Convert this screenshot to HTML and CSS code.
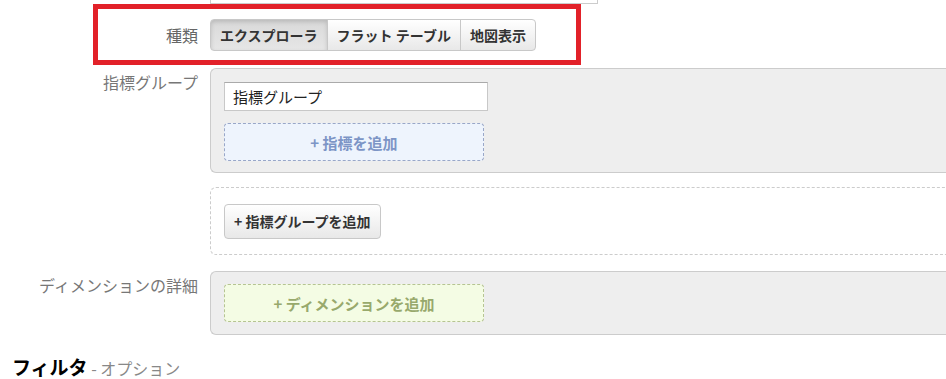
FILE: index.html
```html
<!DOCTYPE html>
<html lang="ja">

<head>
  <meta charset="UTF-8" />
  <title>レポートの設定</title>
  <link rel="stylesheet" href="styles.css">
</head>

<body>
  <div class="prev-field"></div>

  <!-- 種類 (強調枠) -->
  <div class="highlight">
    <div class="row row-type">
      <label class="row-label">種類</label>
      <div class="btn-group">
        <button class="btn active">エクスプローラ</button>
        <button class="btn">フラット テーブル</button>
        <button class="btn">地図表示</button>
      </div>
    </div>
  </div>

  <div class="row row-metrics">
    <label class="row-label">指標グループ</label>
    <div class="row-body">
      <div class="panel">
        <input class="text-input" type="text" value="指標グループ" />
        <div class="add-zone add-metric">+ 指標を追加</div>
      </div>
      <div class="dashed-box">
        <button class="btn btn-add">+ 指標グループを追加</button>
      </div>
    </div>
  </div>

  <div class="row row-dims">
    <label class="row-label">ディメンションの詳細</label>
    <div class="row-body">
      <div class="panel panel-dims">
        <div class="add-zone add-dim">+ ディメンションを追加</div>
      </div>
    </div>
  </div>

  <h3 class="section-title"><strong>フィルタ</strong><span> - オプション</span></h3>
</body>

</html>
```

FILE: styles.css
```css
html,
body {
  overflow: hidden;
}

body {
  margin: 0;
  background: #fff;
  font-family: "Noto Sans CJK JP", sans-serif;
  color: #333;
}

/* 上の入力欄の下端 */
.prev-field {
  margin-left: 210px;
  width: 386px;
  height: 3px;
  border: 1px solid #ccc;
  border-top: none;
}

.highlight {
  margin-left: 93px;
  width: 488px;
  box-sizing: border-box;
  border: 5px solid #e22129;
  padding: 10px 0 9px;
}

.row {
  display: grid;
  grid-template-columns: 198px 1fr;
  column-gap: 12px;
  align-items: start;
}

.highlight .row {
  grid-template-columns: 100px auto;
  align-items: center;
}

.row-label {
  text-align: right;
  font-size: 16px;
  line-height: 28px;
  color: #777;
  white-space: nowrap;
}

.row-type .row-label {
  color: #666;
}

.row-metrics {
  margin-top: 3px;
}

.row-dims {
  margin-top: 16px;
}

/* ボタン */
.btn-group {
  display: flex;
}

.btn {
  height: 32px;
  padding: 0 9px;
  font-family: inherit;
  font-size: 14px;
  font-weight: bold;
  line-height: 30px;
  color: #333;
  border: 1px solid #c8c8c8;
  border-radius: 4px;
  background: linear-gradient(#ffffff, #e8e8e8);
  white-space: nowrap;
}

.btn-group .btn {
  border-radius: 0;
  margin-left: -1px;
}

.btn-group .btn:first-child {
  margin-left: 0;
  border-radius: 4px 0 0 4px;
}

.btn-group .btn:last-child {
  border-radius: 0 4px 4px 0;
}

.btn.active {
  background: linear-gradient(#d9d9d9, #e6e6e6);
  box-shadow: inset 0 2px 4px rgba(0, 0, 0, 0.15);
}

.btn-add {
  display: block;
  height: 35px;
  line-height: 33px;
}

/* パネル */
.panel {
  background: #eee;
  border: 1px solid #ccc;
  border-right: none;
  border-radius: 6px 0 0 6px;
  padding: 13px 13px 11px;
}

.panel-dims {
  padding: 12px 13px;
}

.text-input {
  display: block;
  width: 264px;
  height: 29px;
  box-sizing: border-box;
  padding: 0 8px;
  border: 1px solid #c8c8c8;
  border-top-color: #aaa;
  background: #fff;
  font-family: inherit;
  font-size: 15px;
  color: #222;
}

.add-zone {
  display: flex;
  align-items: center;
  justify-content: center;
  width: 260px;
  height: 38px;
  box-sizing: border-box;
  border: 1px dashed;
  border-radius: 4px;
  font-size: 15px;
  font-weight: bold;
}

.add-metric {
  margin-top: 12px;
  background: #eef4fd;
  border-color: #99a7c8;
  color: #7d95c6;
}

.add-dim {
  background: #f4fce4;
  border-color: #b6c492;
  color: #98a96c;
}

.dashed-box {
  margin-top: 14px;
  border: 1px dashed #ccc;
  border-right: none;
  border-radius: 6px 0 0 6px;
  padding: 16px 13px 15px;
}

.section-title {
  margin: 21px 0 0 12px;
  font-size: 19px;
  line-height: 22px;
  font-weight: normal;
}

.section-title strong {
  color: #000;
}

.section-title span {
  font-size: 16px;
  color: #888;
}
```
